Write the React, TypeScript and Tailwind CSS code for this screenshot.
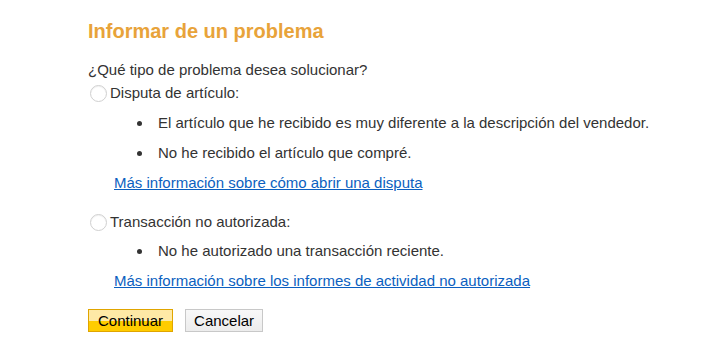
export default function App() {
  return (
    <div className="w-[720px] h-[360px] bg-white font-['Liberation_Sans',Arial,sans-serif] text-[#333] text-[15px]">
      <div className="pl-[88px] pt-[17px]">
        <h1 className="text-[20px] font-bold text-[#e8a33a] leading-[28px]">
          Informar de un problema
        </h1>

        <p className="mt-[16px] leading-[18px]">¿Qué tipo de problema desea solucionar?</p>

        <label className="flex items-center leading-[18px] mt-[5px]">
          <span className="w-[17px] h-[17px] rounded-full border border-[#d0d0d0] bg-white shadow-[inset_0_1px_1px_rgba(0,0,0,0.06)] ml-[2px] mr-[3px]" />
          Disputa de artículo:
        </label>

        <ul className="mt-[12px] pl-[49px] flex flex-col gap-[12px]">
          <li className="flex items-center leading-[18px]">
            <span className="w-[5px] h-[5px] rounded-full bg-[#333] mr-[16px]" />
            El artículo que he recibido es muy diferente a la descripción del vendedor.
          </li>
          <li className="flex items-center leading-[18px]">
            <span className="w-[5px] h-[5px] rounded-full bg-[#333] mr-[16px]" />
            No he recibido el artículo que compré.
          </li>
        </ul>

        <a href="#" className="block mt-[12px] ml-[26px] leading-[18px] text-[#0b5fc0] underline">
          Más información sobre cómo abrir una disputa
        </a>

        <label className="flex items-center leading-[18px] mt-[21px]">
          <span className="w-[17px] h-[17px] rounded-full border border-[#d0d0d0] bg-white shadow-[inset_0_1px_1px_rgba(0,0,0,0.06)] ml-[2px] mr-[3px]" />
          Transacción no autorizada:
        </label>

        <ul className="mt-[11px] pl-[49px]">
          <li className="flex items-center leading-[18px]">
            <span className="w-[5px] h-[5px] rounded-full bg-[#333] mr-[16px]" />
            No he autorizado una transacción reciente.
          </li>
        </ul>

        <a href="#" className="block mt-[12px] ml-[26px] leading-[18px] text-[#0b5fc0] underline">
          Más información sobre los informes de actividad no autorizada
        </a>

        <div className="flex gap-[12px] mt-[19px]">
          <button className="h-[23px] px-[9px] border border-[#e0a500] bg-[linear-gradient(#fee9a6_0%,#fee9a6_50%,#ffcc00_50%,#ffcc00_100%)] text-black text-[15px] leading-[20px]">
            Continuar
          </button>
          <button className="h-[23px] px-[8px] border border-[#c8c8c8] bg-[linear-gradient(#f8f8f8,#ececec)] text-black text-[15px] leading-[20px]">
            Cancelar
          </button>
        </div>
      </div>
    </div>
  );
}
